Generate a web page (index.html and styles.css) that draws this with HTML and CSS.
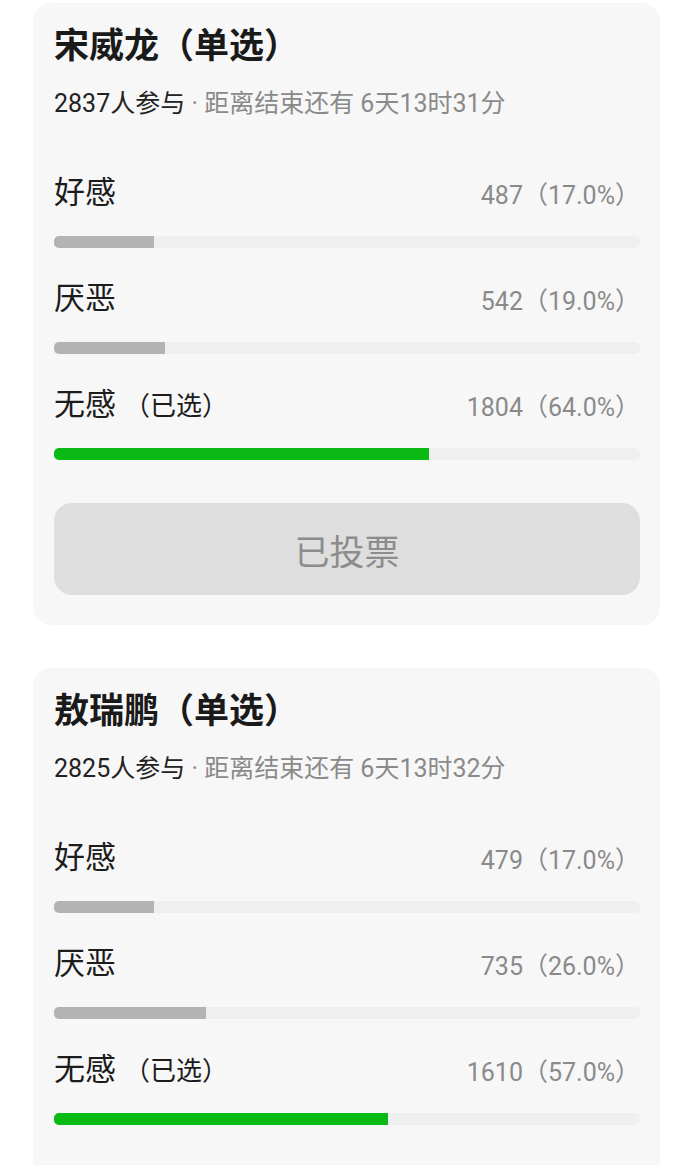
FILE: index.html
```html
<!doctype html>
<html lang="zh-CN">
  <head>
    <meta charset="UTF-8" />
    <meta name="viewport" content="width=device-width, initial-scale=1.0" />
    <title>投票</title>
    <link rel="stylesheet" href="styles.css">
  </head>
  <body>
    <div class="list">
      <div class="poll">
        <h2 class="poll-title">宋威龙（单选）</h2>
        <div class="poll-meta">
          <span class="count">2837人参与</span> · 距离结束还有 6天13时31分
        </div>

        <div class="option">
          <div class="option-row">
            <span class="option-label">好感</span>
            <span class="option-value">487（17.0%）</span>
          </div>
          <div class="bar"><div class="bar-fill" style="width: 17%"></div></div>
        </div>

        <div class="option">
          <div class="option-row">
            <span class="option-label">厌恶</span>
            <span class="option-value">542（19.0%）</span>
          </div>
          <div class="bar"><div class="bar-fill" style="width: 19%"></div></div>
        </div>

        <div class="option">
          <div class="option-row">
            <span class="option-label">无感<span class="picked">（已选）</span></span>
            <span class="option-value">1804（64.0%）</span>
          </div>
          <div class="bar"><div class="bar-fill chosen" style="width: 64%"></div></div>
        </div>

        <button class="vote-btn" disabled>已投票</button>
      </div>

      <div class="poll">
        <h2 class="poll-title">敖瑞鹏（单选）</h2>
        <div class="poll-meta">
          <span class="count">2825人参与</span> · 距离结束还有 6天13时32分
        </div>

        <div class="option">
          <div class="option-row">
            <span class="option-label">好感</span>
            <span class="option-value">479（17.0%）</span>
          </div>
          <div class="bar"><div class="bar-fill" style="width: 17%"></div></div>
        </div>

        <div class="option">
          <div class="option-row">
            <span class="option-label">厌恶</span>
            <span class="option-value">735（26.0%）</span>
          </div>
          <div class="bar"><div class="bar-fill" style="width: 26%"></div></div>
        </div>

        <div class="option">
          <div class="option-row">
            <span class="option-label">无感<span class="picked">（已选）</span></span>
            <span class="option-value">1610（57.0%）</span>
          </div>
          <div class="bar"><div class="bar-fill chosen" style="width: 57%"></div></div>
        </div>

        <button class="vote-btn" disabled>已投票</button>
      </div>
    </div>
  </body>
</html>
```

FILE: styles.css
```css
body {
  margin: 0;
  background: #fff;
  font-family: Roboto, "Noto Sans CJK SC", sans-serif;
  color: #1c1c1c;
}
.list {
  padding: 3px 30px 0 33px;
  display: flex;
  flex-direction: column;
  gap: 43px;
}
.poll {
  background: #f7f7f7;
  border-radius: 18px;
  padding: 22px 20px 30px 21px;
}
.poll-title {
  margin: 0;
  font-size: 35px;
  line-height: 44px;
  font-weight: bold;
  color: #1a1a1a;
}
.poll-meta {
  margin-top: 19px;
  font-size: 25px;
  line-height: 32px;
  color: #8a8a8a;
}
.poll-meta .count {
  color: #222;
}
.option {
  padding-top: 53px;
}
.option + .option {
  padding-top: 31px;
}
.option-row {
  display: flex;
  justify-content: space-between;
  align-items: center;
  height: 40px;
}
.option-label {
  font-size: 31px;
  line-height: 40px;
  color: #1c1c1c;
}
.picked {
  font-size: 26px;
  margin-left: 8px;
}
.option-value {
  font-size: 25px;
  color: #8a8a8a;
}
.bar {
  margin-top: 23px;
  height: 12px;
  background: #efefef;
  border-radius: 5px;
  overflow: hidden;
}
.bar-fill {
  height: 100%;
  background: #b3b3b3;
}
.bar-fill.chosen {
  background: #0ab914;
}
.vote-btn {
  display: block;
  width: 100%;
  height: 92px;
  margin-top: 43px;
  border: none;
  border-radius: 18px;
  background: #dedede;
  color: #8c8c8c;
  font-family: inherit;
  font-size: 35px;
}
```
